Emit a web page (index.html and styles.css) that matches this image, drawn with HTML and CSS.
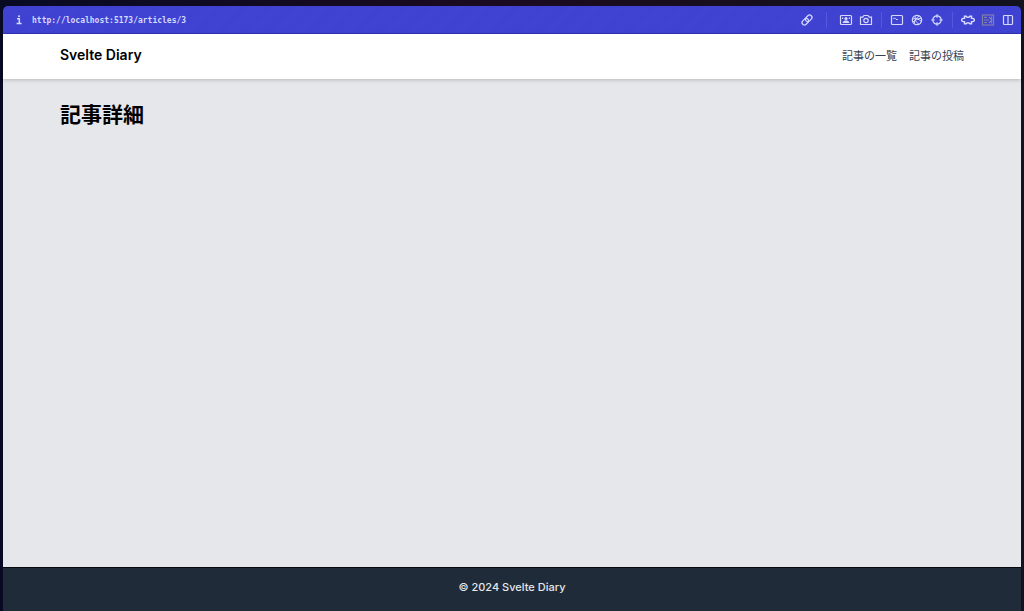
FILE: index.html
```html
<!DOCTYPE html>
<html lang="ja">
<head>
  <meta charset="UTF-8" />
  <meta name="viewport" content="width=device-width, initial-scale=1.0" />
  <title>Svelte Diary</title>
  <link rel="stylesheet" href="styles.css">
</head>
<body>
  <div class="window">
    <div class="toolbar">
      <button class="tool" type="button" aria-label="Site info">
        <svg viewBox="0 0 14 14"><path d="M5 5.7h2.3v4.6M4.6 10.4h5" stroke-width="1.5"/><circle class="solid" cx="7" cy="3.2" r="1"/></svg>
      </button>
      <input class="url" type="text" aria-label="URL" value="http://localhost:5173/articles/3" readonly>

      <button class="tool" type="button" aria-label="Copy link">
        <svg viewBox="0 0 14 14"><g transform="rotate(-45 7 7)"><rect x="1" y="4.6" width="7.2" height="4.8" rx="2.4"/><rect x="5.8" y="4.6" width="7.2" height="4.8" rx="2.4"/></g></svg>
      </button>
      <span class="divider wide"></span>
      <button class="tool" type="button" aria-label="Capture element">
        <svg viewBox="0 0 14 14"><rect x="1.5" y="2.5" width="11" height="9" rx="1"/><circle class="solid" cx="7" cy="5.6" r="1.6"/><path class="solid" d="M3.6 10c.4-2.2 1.8-2.6 3.4-2.6s3 .4 3.4 2.6z"/><path d="M3.6 4.5v1.5M10.4 4.5v1.5"/></svg>
      </button>
      <button class="tool" type="button" aria-label="Take screenshot">
        <svg viewBox="0 0 14 14"><path d="M1.5 4.2h2.3l1.2-1.7h4l1.2 1.7h2.3v7.3h-11z"/><circle cx="7" cy="7.5" r="2.2"/></svg>
      </button>
      <span class="divider"></span>
      <button class="tool" type="button" aria-label="Console">
        <svg viewBox="0 0 14 14"><rect x="1.5" y="2.5" width="11" height="9" rx="1"/><path d="M3.2 6.2l1.3-1.4 1.3 1.4M6 6.5h1.8" stroke-width="1"/></svg>
      </button>
      <button class="tool" type="button" aria-label="Network">
        <svg viewBox="0 0 14 14"><circle cx="7" cy="7" r="4.7"/><path d="M5.5 2.6c-1 3 0 6.5 3.5 8.6M9.5 3c-3 1.500-5 4-5.200 7.500M2.500 6c3-1 6.500 0 9 2.500M3 9c2-2.500 5-3.800 8.300-3.500" stroke-width="1"/></svg>
      </button>
      <button class="tool" type="button" aria-label="Inspect element">
        <svg viewBox="0 0 14 14"><circle cx="7" cy="7" r="4.2"/><path d="M7 1.2v3.5M7 9.3v3.5M1.2 7h3.5M9.3 7h3.5"/></svg>
      </button>
      <span class="divider"></span>
      <button class="tool" type="button" aria-label="Extensions">
        <svg viewBox="0 0 14 14"><path d="M3.500 3.300h1.700c.5 1.400 3.100 1.400 3.600 0h1.700v1.900c1.200-.2 2.900.5 2.900 1.800s-1.700 2-2.900 1.800v1.900H8.800c-.5-1.400-3.100-1.400-3.600 0H3.500V8.800C2.300 9 .6 8.300.6 7s1.700-2 2.900-1.800z" stroke-width="1.500"/></svg>
      </button>
      <button class="tool muted" type="button" aria-label="Extension">
        <svg viewBox="0 0 14 14"><rect x="1.500" y="2" width="11" height="10"/><path d="M3 4.300h3M3 7h5M3 9.500h3M8 4l3 3-3 3M10.500 3.500v7"/></svg>
      </button>
      <button class="tool" type="button" aria-label="Split view">
        <svg viewBox="0 0 14 14"><rect x="2.500" y="2.500" width="9" height="9" rx="1"/><path d="M7 2.500v9"/></svg>
      </button>
    </div>

    <header class="header">
      <a class="brand" href="/">Svelte Diary</a>
      <nav class="nav">
        <a href="/articles">記事の一覧</a>
        <a href="/articles/new">記事の投稿</a>
      </nav>
    </header>

    <main class="main">
      <h1>記事詳細</h1>
    </main>

    <footer class="footer">
      <p>© 2024 Svelte Diary</p>
    </footer>
  </div>
</body>
</html>
```

FILE: styles.css
```css
* {
  box-sizing: border-box;
}

body {
  margin: 0;
  background: linear-gradient(90deg, #080a24, #1b0b20 50%, #12131f);
  font-family: Inter, "Noto Sans CJK JP", sans-serif;
  color: #000;
}

.window {
  display: flex;
  flex-direction: column;
  min-height: 100vh;
  padding: 6px 3px 0;
}

/* browser bar */
.toolbar {
  display: flex;
  align-items: center;
  height: 28px;
  padding: 0 3px 0 6px;
  border-bottom: 1px solid #3434b8;
  border-radius: 5px 5px 0 0;
  background: repeating-linear-gradient(135deg, #4043d2 0 8px, #3f42d0 8px 16px);
}

.tool {
  display: flex;
  align-items: center;
  justify-content: center;
  width: 20px;
  height: 20px;
  padding: 0;
  border: none;
  background: none;
  color: #d5d9ff;
}

.tool svg {
  width: 14px;
  height: 14px;
  fill: none;
  stroke: currentColor;
  stroke-width: 1.2;
}

.tool .solid {
  fill: currentColor;
  stroke: none;
}

.muted {
  color: #8080a8;
}

.url {
  flex: 1;
  min-width: 0;
  padding: 2px 3px 0;
  border: none;
  outline: none;
  background: none;
  color: #d5d9ff;
  font-family: "DejaVu Sans Mono", monospace;
  font-size: 8px;
  font-weight: bold;
}

.divider {
  width: 1px;
  height: 16px;
  margin: 0 5px;
  background: #5558dc;
}

.divider.wide {
  margin: 0 9px;
}

/* page */
.header {
  position: relative;
  display: flex;
  align-items: center;
  justify-content: space-between;
  height: 45px;
  padding: 0 57px 4px;
  background: #fff;
  box-shadow: 0 1px 4px rgba(0, 0, 0, 0.2);
}

.header a {
  text-decoration: none;
}

.brand {
  color: #000;
  font-size: 14px;
  font-weight: 600;
}

.nav {
  display: flex;
  gap: 12px;
}

.nav a {
  color: #374151;
  font-size: 11px;
}

.main {
  flex: 1;
  padding: 20px 57px;
  background: #e5e7eb;
}

h1 {
  margin: 0;
  font-size: 21px;
  line-height: 32px;
  font-weight: bold;
}

.footer {
  padding: 10px 57px 15px;
  border-top: 1px solid #050a10;
  background: #1f2b38;
  color: #e5e7eb;
  text-align: center;
}

.footer p {
  margin: 0;
  font-size: 11px;
  line-height: 18px;
  font-weight: 500;
}
```
